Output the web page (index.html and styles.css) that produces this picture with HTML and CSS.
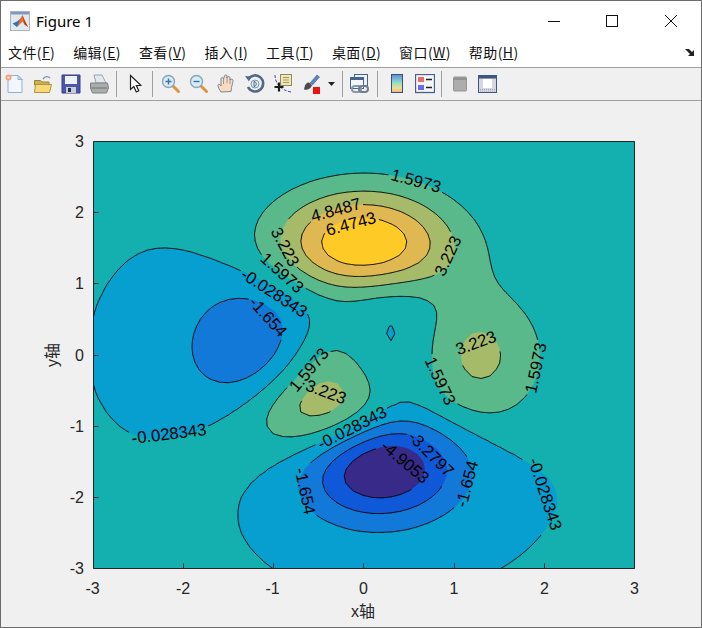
FILE: index.html
```html
<!DOCTYPE html>
<html lang="zh">
<head>
    <meta charset="UTF-8">
    <title>Figure 1</title>
    <link rel="stylesheet" href="styles.css">
</head>
<body>
<div class="window">
    <div class="titlebar">
        <svg class="app-icon" width="20" height="20" viewBox="0 0 20 20">
            <rect x="0.500" y="0.500" width="19" height="19" fill="#e3e8ef" stroke="#a9b4c2"/>
            <rect x="1" y="1" width="18" height="2.500" fill="#7f9ac0"/>
            <path d="M2.500 12.500l4.500-2 3-2.500 1 3-4 5z" fill="#1f78c4"/>
            <path d="M7 16l3-8 2.500-4 2 5 3.500 7-3.500-2.500-2-3-2.500 2.500z" fill="#ec6a24"/>
            <path d="M12.500 4l2 5 3.500 7-3.500-2.500z" fill="#c8341a"/>
        </svg>
        <span class="title">Figure 1</span>
        <div class="win-buttons">
            <div class="win-btn"><svg width="12" height="12" viewBox="0 0 12 12"><path d="M0 6.500h12" stroke="#111"/></svg></div>
            <div class="win-btn"><svg width="12" height="12" viewBox="0 0 12 12"><rect x="0.500" y="0.500" width="11" height="11" fill="none" stroke="#111"/></svg></div>
            <div class="win-btn"><svg width="12" height="12" viewBox="0 0 12 12"><path d="M0 0l12 12M12 0L0 12" stroke="#111"/></svg></div>
        </div>
    </div>

    <div class="menubar">
        <span class="menu-item">文件(<u>F</u>)</span>
        <span class="menu-item">编辑(<u>E</u>)</span>
        <span class="menu-item">查看(<u>V</u>)</span>
        <span class="menu-item">插入(<u>I</u>)</span>
        <span class="menu-item">工具(<u>T</u>)</span>
        <span class="menu-item">桌面(<u>D</u>)</span>
        <span class="menu-item">窗口(<u>W</u>)</span>
        <span class="menu-item">帮助(<u>H</u>)</span>
        <svg class="dock" width="11" height="9" viewBox="0 0 11 9"><path d="M0 1l4 0 3 3 2-2v6H3l2-2-3-3z" fill="#222"/></svg>
    </div>

    <div class="toolbar">
        <div class="tool"><svg width="20" height="20" viewBox="0 0 20 20">
            <path d="M3 1.500h10l4 4v13H3z" fill="#f3f7fd" stroke="#8db0da"/>
            <path d="M13 1.500v4h4z" fill="#cfe0f5" stroke="#8db0da"/>
            <circle cx="3.500" cy="3.500" r="3" fill="#f0a078"/><circle cx="3.500" cy="3.500" r="1.200" fill="#fbe3c8"/>
        </svg></div>
        <div class="tool"><svg width="20" height="20" viewBox="0 0 20 20">
            <path d="M10 5c2-3 5-3 7-1" fill="none" stroke="#7f93a8" stroke-width="1.400"/>
            <path d="M1.500 6.500h6l1.500 1.500h7v3h-14.500z" fill="#d0b04e" stroke="#97843f"/>
            <path d="M1.500 18.500l1-8h16l-2 8z" fill="#f6da78" stroke="#a89444"/>
        </svg></div>
        <div class="tool"><svg width="20" height="20" viewBox="0 0 20 20">
            <path d="M1 1h18v18H1z" fill="#4a56a8" stroke="#363f84"/>
            <rect x="4" y="2" width="12" height="8" fill="#eef1fa"/>
            <rect x="5" y="13" width="10" height="6" fill="#c8ccd8"/><rect x="7" y="14" width="3" height="4" fill="#2a3040"/>
        </svg></div>
        <div class="tool"><svg width="20" height="20" viewBox="0 0 20 20">
            <path d="M5 1h8l4 8H7z" fill="#e2e8ed" stroke="#9aa3aa"/>
            <path d="M1.500 9h17l1 5-2 5H3.500l-2-5z" fill="#a9adac" stroke="#7d8180"/>
            <path d="M2.500 14h15.500" stroke="#6d7170"/>
        </svg></div>
        <div class="sep"></div>
        <div class="tool"><svg width="20" height="20" viewBox="0 0 20 20">
            <path d="M4.500 1.500v14l3.300-3 2.500 5.500 2.500-1.200-2.500-5.200 4.500-.3z" fill="#fff" stroke="#222" stroke-width="1.200"/>
        </svg></div>
        <div class="sep sep-narrow"></div>
        <div class="tool"><svg width="20" height="20" viewBox="0 0 20 20">
            <path d="M11.500 11.500l6 6" stroke="#dc9440" stroke-width="3" stroke-linecap="round"/>
            <circle cx="7.500" cy="7.500" r="6" fill="#d8ecf8" stroke="#8aa4b8" stroke-width="1.400"/>
            <path d="M4.500 7.500h6M7.500 4.500v6" stroke="#3c6fae" stroke-width="1.400"/>
        </svg></div>
        <div class="tool"><svg width="20" height="20" viewBox="0 0 20 20">
            <path d="M11.500 11.500l6 6" stroke="#dc9440" stroke-width="3" stroke-linecap="round"/>
            <circle cx="7.500" cy="7.500" r="6" fill="#d8ecf8" stroke="#8aa4b8" stroke-width="1.400"/>
            <path d="M4.500 7.500h6" stroke="#3c6fae" stroke-width="1.400"/>
        </svg></div>
        <div class="tool"><svg width="20" height="20" viewBox="0 0 20 20">
            <path d="M4 18c-2-3-3-5-3-7 0-1 2-1 3 1l0-7c0-2 2-2 2.500 0l1-3c.5-1.500 2.500-1.500 2.500 0v2c.5-2 3-2 3 0l0 2c1-1.500 3-1 3 .5-.3 3-1 5-1.500 7l-.5 4z" fill="#f8dcc0" stroke="#7f8794"/>
            <path d="M6.500 5v5M10 3v6M13 5v5" stroke="#7f8794" stroke-width="0.800"/>
        </svg></div>
        <div class="tool"><svg width="20" height="20" viewBox="0 0 20 20">
            <path d="M3.500 5A8 8 0 1 1 3 13" fill="none" stroke="#4f6a88" stroke-width="2.600"/>
            <path d="M0 2l6 .5-2 5z" fill="#4f6a88"/>
            <circle cx="10" cy="10" r="4" fill="#e6edf3" stroke="#8296aa"/>
            <path d="M9 7.500v5M9 7.500c3 0 3 5 0 5" fill="none" stroke="#4f6a88"/>
        </svg></div>
        <div class="tool"><svg width="20" height="20" viewBox="0 0 20 20">
            <path d="M2 1c0 8 5 15 16 17" fill="none" stroke="#3b49d0" stroke-dasharray="3 1.500"/>
            <rect x="7.500" y="0.500" width="11" height="11" fill="#f0e8b4" stroke="#8f8a60"/>
            <path d="M10 3.500h6M10 6h6M10 8.500h6" stroke="#a09a68"/>
            <path d="M6 8.500v9M1.500 13h9" stroke="#1c1c1c" stroke-width="2.200"/>
        </svg></div>
        <div class="tool"><svg width="20" height="20" viewBox="0 0 20 20">
            <path d="M9 9l7-8 2.500 2-7 8z" fill="#5d84c8" stroke="#41608f" stroke-width="0.600"/>
            <path d="M8 8.500c-3 0-4 2-5 7 3 1 6 0 8-4z" fill="#4a4a4a"/>
            <rect x="12" y="13" width="7" height="7" fill="#ee1111"/>
        </svg></div>
        <div class="tool-arrow"><svg width="7" height="4" viewBox="0 0 7 4"><path d="M0 0h7L3.500 4z" fill="#222"/></svg></div>
        <div class="sep sep-wide"></div>
        <div class="tool"><svg width="20" height="20" viewBox="0 0 20 20">
            <rect x="4.500" y="0.500" width="13" height="11" fill="#eef2f6" stroke="#47648f"/>
            <rect x="0.500" y="3.500" width="13" height="11" fill="#f4f6f8" stroke="#47648f"/>
            <rect x="1" y="4" width="12" height="2" fill="#47648f"/>
            <rect x="2" y="12" width="9" height="6" rx="3" fill="none" stroke="#8a97a8" stroke-width="2"/>
            <rect x="9" y="12" width="9" height="6" rx="3" fill="none" stroke="#6f7f92" stroke-width="2"/>
        </svg></div>
        <div class="sep"></div>
        <div class="tool"><svg width="20" height="20" viewBox="0 0 20 20">
            <defs><linearGradient id="cbar" x1="0" y1="0" x2="0" y2="1">
                <stop offset="0" stop-color="#5d8fd8"/><stop offset="0.450" stop-color="#8fdcc8"/>
                <stop offset="0.750" stop-color="#eee090"/><stop offset="1" stop-color="#f0b088"/>
            </linearGradient></defs>
            <rect x="4.500" y="0.500" width="11" height="18" fill="url(#cbar)" stroke="#3b4f78"/>
        </svg></div>
        <div class="tool"><svg width="20" height="20" viewBox="0 0 20 20">
            <rect x="0.500" y="0.500" width="19" height="18" fill="#f4f6fa" stroke="#4a6088" stroke-width="1.300"/>
            <rect x="3" y="3" width="6" height="5" fill="#ec6a6a"/><rect x="3" y="11" width="6" height="5" fill="#6a6aec"/>
            <path d="M11 5.500h6M11 13.500h6" stroke="#222" stroke-width="1.400"/>
        </svg></div>
        <div class="sep sep-narrow"></div>
        <div class="tool"><svg width="20" height="20" viewBox="0 0 20 20">
            <rect x="3.500" y="3" width="13" height="14" rx="1" fill="#adadad" stroke="#949494"/>
            <rect x="4" y="3.500" width="12" height="2.500" fill="#919191"/>
        </svg></div>
        <div class="tool"><svg width="20" height="20" viewBox="0 0 20 20">
            <rect x="0.500" y="1.500" width="18" height="17" fill="#d5d8de" stroke="#3f5680"/>
            <rect x="1" y="2" width="17" height="2.500" fill="#3f5680"/>
            <rect x="5" y="5" width="9" height="9" fill="#fff"/>
            <path d="M2 15.500h15M2 17h15" stroke="#a8adb6" stroke-dasharray="1 1"/>
        </svg></div>
    </div>

    <div class="figure">
        <svg id="plot" width="700" height="526" viewBox="1 101 700 526">
            <g id="fills"></g>
            <g id="lines"></g>
            <path class="axes" d="M93.500 141.500H634.500V568.500H93.500Z"/>
            <path class="axes" d="M183.500 568.500v-5M273.500 568.500v-5M363.500 568.500v-5M454.500 568.500v-5M544.500 568.500v-5M93.500 212.500h5M93.500 283.500h5M93.500 355.500h5M93.500 426.500h5M93.500 497.500h5"/>

            <g class="ticks ticks-y">
                <text x="84" y="147">3</text>
                <text x="84" y="218">2</text>
                <text x="84" y="289">1</text>
                <text x="84" y="361">0</text>
                <text x="84" y="432">-1</text>
                <text x="84" y="503">-2</text>
                <text x="84" y="574">-3</text>
            </g>
            <g class="ticks ticks-x">
                <text x="92.500" y="594">-3</text>
                <text x="183" y="594">-2</text>
                <text x="272.500" y="594">-1</text>
                <text x="363.500" y="594">0</text>
                <text x="454" y="594">1</text>
                <text x="544.500" y="594">2</text>
                <text x="634.500" y="594">3</text>
            </g>
            <text class="axis-label" x="363" y="617">x轴</text>
            <text class="axis-label" transform="translate(58 355) rotate(-90)">y轴</text>

            <g id="labels" class="clabels">
                <text transform="translate(416 181) rotate(15)">1.5973</text>
                <text transform="translate(336 210) rotate(-15)">4.8487</text>
                <text transform="translate(351 224) rotate(-15)">6.4743</text>
                <text transform="translate(285 247) rotate(62)">3.223</text>
                <text transform="translate(282 273) rotate(42)">1.5973</text>
                <text transform="translate(274 293) rotate(33)">-0.028343</text>
                <text transform="translate(268 317) rotate(48)">-1.654</text>
                <text transform="translate(448 256) rotate(-65)">3.223</text>
                <text transform="translate(476 343) rotate(-20)">3.223</text>
                <text transform="translate(440 381) rotate(65)">1.5973</text>
                <text transform="translate(536 368) rotate(-78)">1.5973</text>
                <text transform="translate(309 370) rotate(-50)">1.5973</text>
                <text transform="translate(326 392) rotate(20)">3.223</text>
                <text transform="translate(169 434) rotate(-7)">-0.028343</text>
                <text transform="translate(352 428) rotate(-27)">-0.028343</text>
                <text transform="translate(431 454) rotate(45)">-3.2797</text>
                <text transform="translate(405 462) rotate(40)">-4.9053</text>
                <text transform="translate(467 484) rotate(-75)">-1.654</text>
                <text transform="translate(305 491) rotate(78)">-1.654</text>
                <text transform="translate(545 494) rotate(72)">-0.028343</text>
            </g>
        </svg>
    </div>
</div>
<script src="plot.js"></script>
</body>
</html>
```

FILE: styles.css
```css
html, body {
    margin: 0;
    padding: 0;
    overflow: hidden;
}
.window {
    box-sizing: border-box;
    width: 702px;
    height: 628px;
    background: #f0f0f0;
    border: 1px solid #6c6c6c;
    font-family: "Noto Sans CJK SC", sans-serif;
    color: #111;
}
.titlebar {
    display: flex;
    align-items: center;
    height: 39px;
    padding-left: 9px;
    background: #fff;
}
.title {
    margin-left: 6px;
    font-family: "Noto Sans", sans-serif;
    font-size: 15px;
    color: #000;
}
.win-buttons {
    display: flex;
    margin-left: auto;
    margin-right: 1px;
}
.win-btn {
    display: flex;
    align-items: center;
    justify-content: center;
    width: 58.500px;
    height: 39px;
}
.menubar {
    display: flex;
    align-items: center;
    gap: 18px;
    height: 25px;
    padding: 0 0 2px 7px;
    background: #fff;
    border-bottom: 1px solid #a0a0a0;
    font-size: 14px;
    letter-spacing: 0.400px;
}
.menu-item {
    white-space: nowrap;
    line-height: 25px;
}
.dock {
    margin-left: auto;
    margin-right: 5px;
}
.toolbar {
    display: flex;
    align-items: center;
    height: 32px;
    background: #f0f0f0;
    border-bottom: 1px solid #a0a0a0;
}
.tool {
    display: flex;
    align-items: center;
    justify-content: center;
    width: 28px;
    height: 32px;
}
.tool-arrow {
    display: flex;
    align-items: center;
    justify-content: center;
    width: 11px;
    margin-left: 1px;
}
.sep {
    width: 1px;
    height: 26px;
    margin: 0 5px 0 3px;
    background: #a0a0a0;
}
.sep-narrow {
    margin: 0 4px 0 2px;
}
.sep-wide {
    margin: 0 3px 0 5px;
}
.figure {
    height: 526px;
}
#plot {
    display: block;
}
.axes {
    fill: none;
    stroke: #262626;
    stroke-width: 1;
}
.contour {
    fill: none;
    stroke: #000;
    stroke-width: 1;
}
.ticks text {
    font-family: "Liberation Sans", sans-serif;
    font-size: 16px;
    fill: #262626;
}
.ticks-y text {
    text-anchor: end;
}
.ticks-x text {
    text-anchor: middle;
}
.axis-label {
    font-family: "Liberation Sans", "Noto Sans CJK SC", sans-serif;
    font-size: 16px;
    fill: #262626;
    text-anchor: middle;
}
.clabels text {
    font-family: "Liberation Sans", sans-serif;
    font-size: 16.700px;
    fill: #000;
    text-anchor: middle;
    dominant-baseline: central;
}
```

FILE: plot.js
```js
// contourf(peaks) with the same levels as the figure, on a 0.1 grid
const N = 61;
const levels = [-4.9053, -3.2797, -1.654, -0.028343, 1.5973, 3.223, 4.8487, 6.4743];
const colors = ['#0f58d8', '#1279d9', '#069fd0', '#14b0b0', '#5ab98a', '#a6bb6a', '#e0b852', '#fdca26'];
const BASE = '#372a88';

const left = 93.5, right = 634.5, top_ = 141.5, bottom = 568.5;
const NS = 'http://www.w3.org/2000/svg';

function peaks(x, y) {
    return 3 * (1 - x) ** 2 * Math.exp(-x * x - (y + 1) ** 2)
        - 10 * (x / 5 - x ** 3 - y ** 5) * Math.exp(-x * x - y * y)
        - Math.exp(-((x + 1) ** 2) - y * y) / 3;
}

function px(i) { return left + (right - left) * i / (N - 1); }
function py(j) { return bottom - (bottom - top_) * j / (N - 1); }

const z = [];
for (let j = 0; j < N; j++) {
    z[j] = [];
    for (let i = 0; i < N; i++) {
        z[j][i] = peaks(-3 + 6 * i / (N - 1), -3 + 6 * j / (N - 1));
    }
}

function cellCorners(i, j) {
    return [
        { x: px(i), y: py(j), v: z[j][i] },
        { x: px(i + 1), y: py(j), v: z[j][i + 1] },
        { x: px(i + 1), y: py(j + 1), v: z[j + 1][i + 1] },
        { x: px(i), y: py(j + 1), v: z[j + 1][i] }
    ];
}

function cross(a, b, level) {
    const t = (level - a.v) / (b.v - a.v);
    return { x: a.x + (b.x - a.x) * t, y: a.y + (b.y - a.y) * t };
}

function addEl(parent, cls, d, fill) {
    const p = document.createElementNS(NS, 'path');
    if (cls) p.setAttribute('class', cls);
    if (fill) p.setAttribute('fill', fill);
    p.setAttribute('d', d);
    parent.appendChild(p);
}

// a label breaks only the line of its own level, over the whole chord it spans
const plot = document.getElementById('plot');
const boxes = [...document.querySelectorAll('#labels text')].map(t => ({
    level: parseFloat(t.textContent),
    b: t.getBBox(),
    inv: t.getCTM().inverse()
}));
const rootCtm = plot.getCTM();

function underLabel(x, y, level) {
    const pt = plot.createSVGPoint();
    pt.x = x;
    pt.y = y;
    const screen = pt.matrixTransform(rootCtm);
    return boxes.some(({ level: l, b, inv }) => {
        if (Math.abs(l - level) > 0.01) return false;
        const q = screen.matrixTransform(inv);
        return q.x > b.x - 2 && q.x < b.x + b.width + 2 && Math.abs(q.y - (b.y + b.height / 2)) < 16;
    });
}

function segmentPath(a, b, level) {
    const len = Math.hypot(b.x - a.x, b.y - a.y);
    const steps = Math.max(1, Math.ceil(len));
    let d = '';
    let on = false;
    for (let s = 0; s <= steps; s++) {
        const x = a.x + (b.x - a.x) * s / steps;
        const y = a.y + (b.y - a.y) * s / steps;
        if (underLabel(x, y, level)) {
            on = false;
        } else {
            d += (on ? 'L' : 'M') + x.toFixed(2) + ' ' + y.toFixed(2);
            on = true;
        }
    }
    return d;
}

const fills = document.getElementById('fills');
const lines = document.getElementById('lines');
addEl(fills, '', `M${left} ${top_}H${right}V${bottom}H${left}Z`, BASE);

levels.forEach((level, n) => {
    let area = '';
    let contour = '';
    for (let j = 0; j < N - 1; j++) {
        for (let i = 0; i < N - 1; i++) {
            const c = cellCorners(i, j);
            const poly = [];
            const hits = [];
            for (let k = 0; k < 4; k++) {
                const a = c[k], b = c[(k + 1) % 4];
                if (a.v >= level) poly.push(a);
                if ((a.v >= level) !== (b.v >= level)) {
                    const h = cross(a, b, level);
                    poly.push(h);
                    hits.push(h);
                }
            }
            if (poly.length > 2) {
                area += 'M' + poly.map(p => p.x.toFixed(2) + ' ' + p.y.toFixed(2)).join('L') + 'Z';
            }
            for (let k = 0; k + 1 < hits.length; k += 2) {
                contour += segmentPath(hits[k], hits[k + 1], level);
            }
        }
    }
    addEl(fills, '', area, colors[n]);
    addEl(lines, 'contour', contour);
});
```
